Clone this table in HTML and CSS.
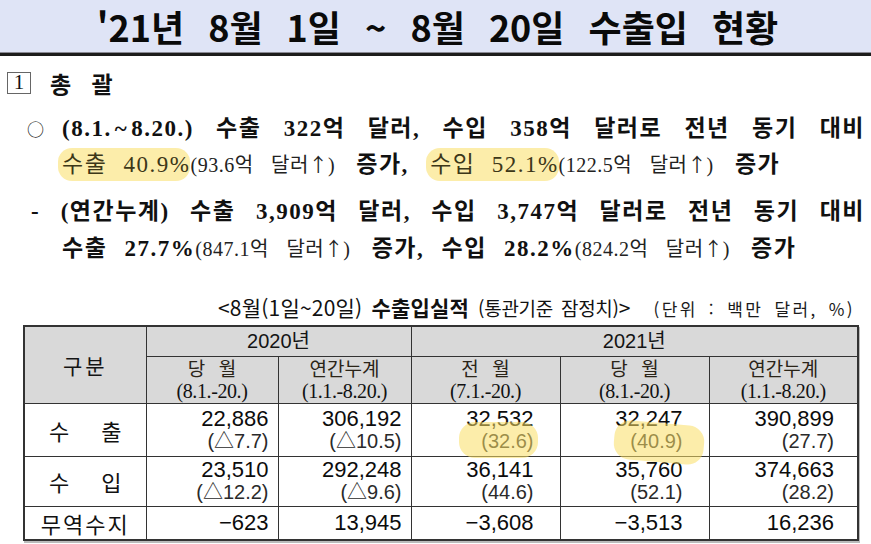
FILE: index.html
```html
<!DOCTYPE html>
<html lang="ko">
<head>
<meta charset="utf-8">
<title>'21년 8월 1일 ~ 8월 20일 수출입 현황</title>
<link rel="stylesheet" href="styles.css">
</head>
<body>
<header class="title-bar">
  <h1 class="title">'21년 8월 1일 ~ 8월 20일 수출입 현황</h1>
</header>

<section class="summary">
  <div class="section-head">
    <span class="num-box">1</span>
    <span class="section-name">총 괄</span>
  </div>

  <div class="item item-main">
    <span class="mark">○</span>
    <div class="item-body">
      <div class="line just bold">(8.1.<span class="tilde">~</span>8.20.) 수출 322억 달러, 수입 358억 달러로 전년 동기 대비</div>
      <div class="line">
        <span class="hl">수출 40.9%</span><span class="small">(93.6억 달러<span class="arrow">↑</span>)</span> <b class="gap">증가,</b> <span class="hl grp2">수입 52.1%</span><span class="small">(122.5억 달러<span class="arrow">↑</span>)</span> <b class="gap">증가</b>
      </div>
    </div>
  </div>

  <div class="item item-sub">
    <div class="line just bold sub-first">- (연간누계) 수출 3,909억 달러, 수입 3,747억 달러로 전년 동기 대비</div>
    <div class="line sub-second">
      <b class="wide">수출 27.7%</b><span class="small">(847.1억 달러<span class="arrow">↑</span>)</span> <b class="gap">증가,</b> <b class="wide grp2">수입 28.2%</b><span class="small">(824.2억 달러<span class="arrow">↑</span>)</span> <b class="gap">증가</b>
    </div>
  </div>
</section>

<section class="results">
  <div class="caption">
    <span class="caption-main">&lt;8월(1일~20일) <b>수출입실적</b> <span class="narrow">(통관기준 잠정치)</span>&gt;</span>
    <span class="unit">(단위 : 백만 달러, %)</span>
  </div>

  <table class="data">
    <colgroup>
      <col class="c-label">
      <col class="c-2020a">
      <col class="c-2020b">
      <col class="c-2021">
      <col class="c-2021">
      <col class="c-2021">
    </colgroup>
    <thead>
      <tr class="h1">
        <th rowspan="2" class="gubun">구분</th>
        <th colspan="2" class="year">2020년</th>
        <th colspan="3" class="year">2021년</th>
      </tr>
      <tr class="h2">
        <th><span class="hk">당 월</span><span class="hd">(8.1.-20.)</span></th>
        <th><span class="hk">연간누계</span><span class="hd">(1.1.-8.20.)</span></th>
        <th><span class="hk">전 월</span><span class="hd">(7.1.-20.)</span></th>
        <th><span class="hk">당 월</span><span class="hd">(8.1.-20.)</span></th>
        <th><span class="hk">연간누계</span><span class="hd">(1.1.-8.20.)</span></th>
      </tr>
    </thead>
    <tbody>
      <tr class="r-exp">
        <th class="rl">수 출</th>
        <td class="p20"><span class="v">22,886</span><span class="s">(△7.7)</span></td>
        <td class="p20"><span class="v">306,192</span><span class="s">(△10.5)</span></td>
        <td class="p21"><span class="v">32,532</span><span class="s"><span class="mark-a">(32.6)</span></span></td>
        <td class="p21"><span class="v">32,247</span><span class="s"><span class="mark-b">(40.9)</span></span></td>
        <td class="p21e"><span class="v">390,899</span><span class="s">(27.7)</span></td>
      </tr>
      <tr class="r-imp">
        <th class="rl">수 입</th>
        <td class="p20"><span class="v">23,510</span><span class="s">(△12.2)</span></td>
        <td class="p20"><span class="v">292,248</span><span class="s">(△9.6)</span></td>
        <td class="p21"><span class="v">36,141</span><span class="s">(44.6)</span></td>
        <td class="p21"><span class="v">35,760</span><span class="s">(52.1)</span></td>
        <td class="p21e"><span class="v">374,663</span><span class="s">(28.2)</span></td>
      </tr>
      <tr class="r-bal">
        <th class="rl2">무역수지</th>
        <td class="p20"><span class="v">−623</span></td>
        <td class="p20"><span class="v">13,945</span></td>
        <td class="p21"><span class="v">−3,608</span></td>
        <td class="p21"><span class="v">−3,513</span></td>
        <td class="p21e"><span class="v">16,236</span></td>
      </tr>
    </tbody>
  </table>
</section>
</body>
</html>
```

FILE: styles.css
```css
* { box-sizing: border-box; }

html, body {
  margin: 0;
  padding: 0;
  background: #ffffff;
}

body {
  width: 871px;
  height: 544px;
  overflow: hidden;
  font-family: "Liberation Serif", "Noto Sans CJK KR", serif;
  color: #111;
}

/* ---------- title ---------- */
.title-bar {
  height: 56px;
  background: #dfe4f6;
  border-bottom: 3px solid #1c1c1c;
  box-shadow: 0 -1px 0 #8a8a94 inset;
}

.title {
  margin: 0;
  height: 53px;
  line-height: 53px;
  text-align: center;
  font-family: "Noto Sans CJK KR", "Liberation Sans", sans-serif;
  font-weight: 700;
  font-size: 36px;
  word-spacing: 14px;
  letter-spacing: 0;
  color: #0a0a0a;
  padding-left: 4px;
}

/* ---------- summary ---------- */
.summary {
  padding: 0 6px 0 0;
}

.section-head {
  display: flex;
  align-items: center;
  margin-top: 16px;
  padding-left: 7px;
  height: 22px;
}

.num-box {
  width: 24px;
  height: 22px;
  border: 1.5px solid #666;
  font-family: "Liberation Serif", serif;
  font-size: 21px;
  line-height: 19px;
  text-align: center;
  color: #111;
}

.section-name {
  margin-left: 19px;
  font-family: "Noto Sans CJK KR", sans-serif;
  font-weight: 700;
  font-size: 23px;
  word-spacing: 14px;
  line-height: 22px;
}

.item {
  font-size: 23px;
  letter-spacing: 1.5px;
}

.item-main {
  display: flex;
  margin-top: 17px;
}

.mark {
  width: 62px;
  padding-left: 27px;
  font-size: 17px;
  line-height: 35px;
  font-family: "Noto Sans CJK KR", sans-serif;
}

.item-body {
  flex: 1;
}

.line {
  height: 35px;
  line-height: 35px;
  white-space: nowrap;
}

.just {
  text-align: justify;
  text-align-last: justify;
}

.tilde {
  margin: 0 3px;
}

.bold { font-weight: 700; }

b { font-weight: 700; }

.gap { margin-left: 14px; }

.grp2 { margin-left: 10px; }

.hl {
  background: rgba(250, 222, 100, 0.55);
  border-radius: 14px;
  padding: 4px 0 4px 4px;
  margin-left: -4px;
  color: #3c3718;
  font-weight: 400;
  word-spacing: 9px;
}

.hl.grp2 { margin-left: 10px; }

.item b { word-spacing: 6px; }

.item b.wide { word-spacing: 10px; }

.small {
  font-size: 20px;
  letter-spacing: 0.5px;
  word-spacing: 12px;
  color: #222;
}

.arrow {
  font-family: "Noto Sans CJK KR", sans-serif;
  font-size: 19px;
  letter-spacing: 0;
}

.item-sub {
  margin-top: 13px;
}

.sub-first {
  padding-left: 31px;
}

.sub-second {
  padding-left: 62px;
  height: 37px;
  line-height: 37px;
}

/* ---------- caption ---------- */
.results {
  padding-left: 23px;
}

.caption {
  display: flex;
  align-items: baseline;
  margin-top: 26px;
  height: 33px;
  width: 834px;
  font-family: "Noto Sans CJK KR", "Liberation Sans", sans-serif;
}

.caption-main {
  margin-left: 195px;
  font-size: 21px;
  letter-spacing: 0.2px;
  word-spacing: 3px;
}

.caption-main b { font-weight: 700; }

.narrow {
  font-size: 19px;
  letter-spacing: -0.3px;
}

.unit {
  margin-left: auto;
  margin-right: 2px;
  font-size: 17px;
  letter-spacing: 2.4px;
  word-spacing: 4px;
  color: #1a1a1a;
}

/* ---------- table ---------- */
.data {
  border-collapse: collapse;
  table-layout: fixed;
  width: 834px;
  font-family: "Liberation Sans", "Noto Sans CJK KR", sans-serif;
  border: 2px solid #333;
  box-shadow: 1px 2px 0 #bbb;
}

.c-label { width: 122px; }
.c-2020a { width: 132px; }
.c-2020b { width: 133px; }
.c-2021 { width: 149px; }

.data th,
.data td {
  border: 1.5px solid #333;
  padding: 0;
}

.data thead th {
  background: #d9d9d9;
  font-weight: 400;
  text-align: center;
  color: #141414;
}

.h1 { height: 30px; }
.h2 { height: 47px; }

.gubun {
  font-family: "Noto Sans CJK KR", sans-serif;
  font-size: 21px;
  letter-spacing: 3px;
}

.year {
  font-size: 20px;
  line-height: 27px;
}

.hk,
.hd {
  display: block;
  line-height: 22.5px;
}

.hk {
  font-family: "Noto Sans CJK KR", sans-serif;
  font-size: 19px;
  word-spacing: 8px;
  color: #2a2418;
}

.hd {
  font-family: "Liberation Serif", serif;
  font-size: 20px;
  letter-spacing: -0.4px;
  color: #111;
}

.r-exp { height: 53px; }
.r-imp { height: 50px; }
.r-bal { height: 32px; }

.rl,
.rl2 {
  font-family: "Noto Sans CJK KR", sans-serif;
  font-weight: 400;
  font-size: 22px;
  text-align: center;
  color: #111;
}

.rl { word-spacing: 26px; }
.rl2 { letter-spacing: 2px; }

.data td {
  text-align: right;
  vertical-align: middle;
}

.p20 { padding-right: 9px !important; }
.p21 { padding-right: 26px !important; }
.p21e { padding-right: 23px !important; }

.v,
.s {
  display: block;
}

.v {
  font-size: 22px;
  line-height: 23px;
  color: #0c0c0c;
}

.s {
  font-size: 20px;
  line-height: 23px;
  color: #2a2a2a;
}

.r-bal .v { line-height: 27px; }

.mark-a,
.mark-b {
  position: relative;
}

.mark-a::before,
.mark-b::before {
  content: "";
  position: absolute;
  background: rgba(250, 222, 100, 0.55);
  border-radius: 16px;
}

.mark-a::before {
  left: -22px;
  right: -4px;
  top: -8px;
  bottom: -6px;
}

.mark-b::before {
  left: -16px;
  right: -22px;
  top: -7px;
  bottom: -10px;
  transform: rotate(5deg);
}
```
